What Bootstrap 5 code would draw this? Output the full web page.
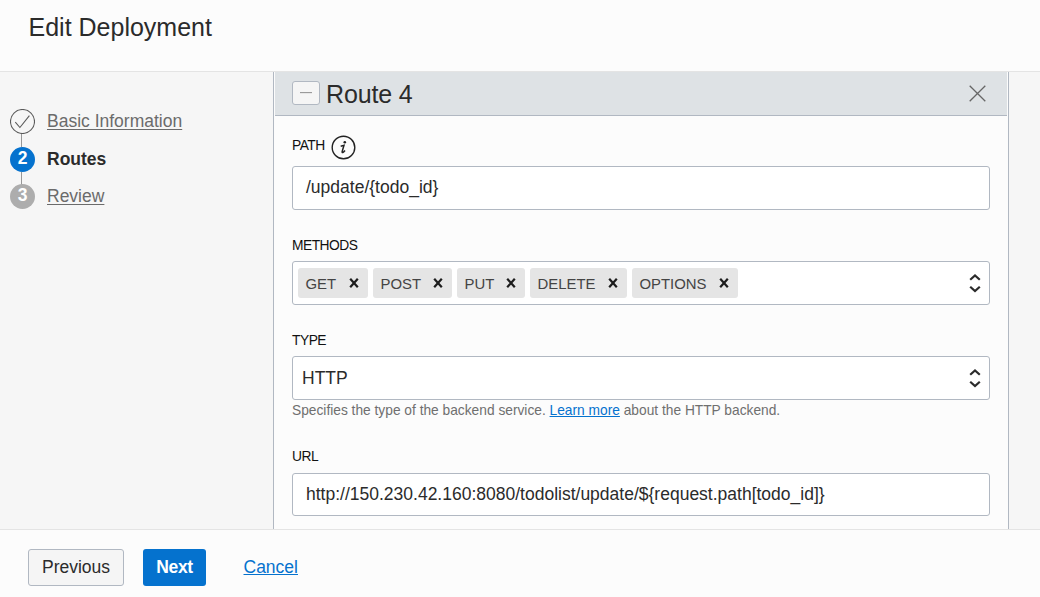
<!DOCTYPE html>
<html lang="en">
<head>
<meta charset="utf-8">
<meta name="viewport" content="width=device-width, initial-scale=1">
<title>Edit Deployment</title>
<link href="https://cdn.jsdelivr.net/npm/bootstrap@5.3.0/dist/css/bootstrap.min.css" rel="stylesheet">
<style>
body{font-family:"Liberation Sans",Arial,sans-serif;font-size:17.5px;line-height:20px;color:#2b2b2b;background:#fcfcfc}
a{color:#0572ce}
.page-head{height:72px;border-bottom:1px solid #e4e4e4;padding:12px 28.5px}
.page-head h1{font-size:25px;line-height:30px;font-weight:400}
.work-area{height:457px;background:#f6f6f6}
.steps{width:273px;padding:37px 0 0 10px}
.step-row{height:37.5px;gap:12px}
.step-row a{color:#6b6b6b;text-underline-offset:2px}
.step-txt{margin-top:2px}
.dot{width:25px;height:25px;border-radius:50%;font-weight:700;color:#fff;line-height:23px;font-size:17.5px}
.dot svg{display:block}
.dot-now{background:#0572ce}
.dot-next{background:#adadad}
.rail{position:relative}
.rail:not(:last-child)::after{content:"";position:absolute;left:11px;top:25px;width:1px;height:13px;background:#979797}
.panel{width:736px;background:#fcfcfc;border:solid #b1b8c2;border-width:0 1px;padding:0 1px}
.route-head{height:44px;background:#dee2e5;border-bottom:1px solid #b1b8c2;padding:0 21px 1px 17px}
.route-head h2{font-size:25px;letter-spacing:-.15px;line-height:30px;font-weight:400;margin:1px 0 0 6px}
.fold{width:28px;height:24px;border:1px solid #b1b8c2;border-radius:3px;background:#f5f5f5}
.fields{padding:0 17px}
.cap{font-size:13.8px;letter-spacing:-.5px;line-height:16px;color:#111}
.path-cap{height:50px;padding-top:19px;gap:6px}
.path-cap span{padding-top:3px}
.box{height:44px;border:1px solid #b1b8c2;border-radius:3px;background:#fff;padding:0 8px 0 13px}
.path-box{padding-bottom:2px}
.methods-cap,.type-cap{margin-top:28px;margin-bottom:7px}
.chips{padding-left:5px;gap:5px}
.chip{height:30px;background:#e5e5e5;border-radius:3px;font-size:14.9px;padding:1px 9px 0 7.5px;color:#444}
.chip svg{margin-bottom:1px}
.type-box{padding-left:9px}
.hint{margin-top:3px;font-size:13.75px;line-height:16px;color:#6f6f6f}
.url-cap{margin-top:30px;margin-bottom:8px}
.url-box{height:43px;padding-bottom:1px}
.page-foot{height:68px;border-top:1px solid #e4e4e4;padding:19px 28px 0}
.page-foot .btn{height:37px;font-size:17.5px;line-height:20px;padding:0 0 2px;border-radius:3px}
.btn-prev{width:96px;background:#f5f5f5;border:1px solid #b1b8c2;color:#2b2b2b}
.page-foot .btn-next{width:63px;margin-left:19px;background:#0572ce;color:#fff;font-weight:700;letter-spacing:-.3px}
.cancel{margin:8px 0 0 37.5px}
</style>
</head>
<body class="overflow-hidden">
<svg class="d-none">
  <symbol id="remove" viewBox="0 0 10 10"><path d="M1.2 .8l7.6 8.4M8.8 .8L1.2 9.2" stroke="#1d1d1d" stroke-width="2.2"/></symbol>
  <symbol id="updown" viewBox="0 0 12 20"><path d="M1.2 6.8L6 2.4l4.8 4.4M1.2 13.7L6 18.1l4.8-4.4" fill="none" stroke="#2b2b2b" stroke-width="2.2"/></symbol>
</svg>
<header class="page-head"><h1 class="m-0">Edit Deployment</h1></header>
<main class="work-area d-flex">
  <nav class="steps flex-shrink-0">
    <div class="step-row rail d-flex align-items-start"><span class="dot"><svg width="25" height="25" fill="none" stroke="#5a5a5a" stroke-width="1.1"><circle cx="12.5" cy="12.5" r="12"/><path d="M5.3 13.2l4.6 5.3L19.4 6.6"/></svg></span><a href="#" class="step-txt">Basic Information</a></div>
    <div class="step-row rail d-flex align-items-start"><span class="dot dot-now text-center">2</span><b class="step-txt">Routes</b></div>
    <div class="step-row rail d-flex align-items-start"><span class="dot dot-next text-center">3</span><a href="#" class="step-txt">Review</a></div>
  </nav>
  <section class="panel flex-shrink-0">
    <div class="route-head d-flex align-items-center">
      <span class="fold d-flex align-items-center justify-content-center flex-shrink-0"><svg width="12" height="2"><path d="M0 .5h12" stroke="#9a9a9a" stroke-width="1.3"/></svg></span>
      <h2>Route 4</h2>
      <svg class="ms-auto" width="17" height="17" fill="none" stroke="#666" stroke-width="1.3"><path d="M.7.7l15.6 15.6M16.3.7L.7 16.3"/></svg>
    </div>
    <div class="fields">
      <div class="cap d-flex path-cap"><span>PATH</span><svg class="flex-shrink-0" width="25" height="25"><circle cx="12.5" cy="12.5" r="11.3" fill="none" stroke="#222" stroke-width="1.4"/><path d="M9.7 11.2l3.3-.9-1.8 6.1q-.3 1.4.6 1.1.8-.3 2.2-2" fill="none" stroke="#222" stroke-width="1.5"/><circle cx="13.8" cy="7.2" r="1.3" fill="#222"/></svg></div>
      <div class="box d-flex align-items-center path-box">/update/{todo_id}</div>
      <div class="cap methods-cap">METHODS</div>
      <div class="box chips d-flex align-items-center">
        <span class="chip d-flex align-items-center" style="width:70px">GET<svg class="ms-auto" width="10" height="10"><use href="#remove"/></svg></span>
        <span class="chip d-flex align-items-center" style="width:79px">POST<svg class="ms-auto" width="10" height="10"><use href="#remove"/></svg></span>
        <span class="chip d-flex align-items-center" style="width:68px">PUT<svg class="ms-auto" width="10" height="10"><use href="#remove"/></svg></span>
        <span class="chip d-flex align-items-center" style="width:97px">DELETE<svg class="ms-auto" width="10" height="10"><use href="#remove"/></svg></span>
        <span class="chip d-flex align-items-center" style="width:106px">OPTIONS<svg class="ms-auto" width="10" height="10"><use href="#remove"/></svg></span>
        <svg class="ms-auto" width="12" height="20"><use href="#updown"/></svg>
      </div>
      <div class="cap type-cap">TYPE</div>
      <div class="box type-box d-flex align-items-center"><span>HTTP</span><svg class="ms-auto" width="12" height="20"><use href="#updown"/></svg></div>
      <div class="hint">Specifies the type of the backend service. <a href="#">Learn more</a> about the HTTP backend.</div>
      <div class="cap url-cap">URL</div>
      <div class="box url-box d-flex align-items-center">http://150.230.42.160:8080/todolist/update/${request.path[todo_id]}</div>
    </div>
  </section>
</main>
<footer class="page-foot d-flex align-items-start">
  <button class="btn btn-prev">Previous</button>
  <button class="btn btn-next border-0">Next</button>
  <a href="#" class="cancel">Cancel</a>
</footer>
<script src="https://cdn.jsdelivr.net/npm/bootstrap@5.3.0/dist/js/bootstrap.bundle.min.js"></script>
</body>
</html>
